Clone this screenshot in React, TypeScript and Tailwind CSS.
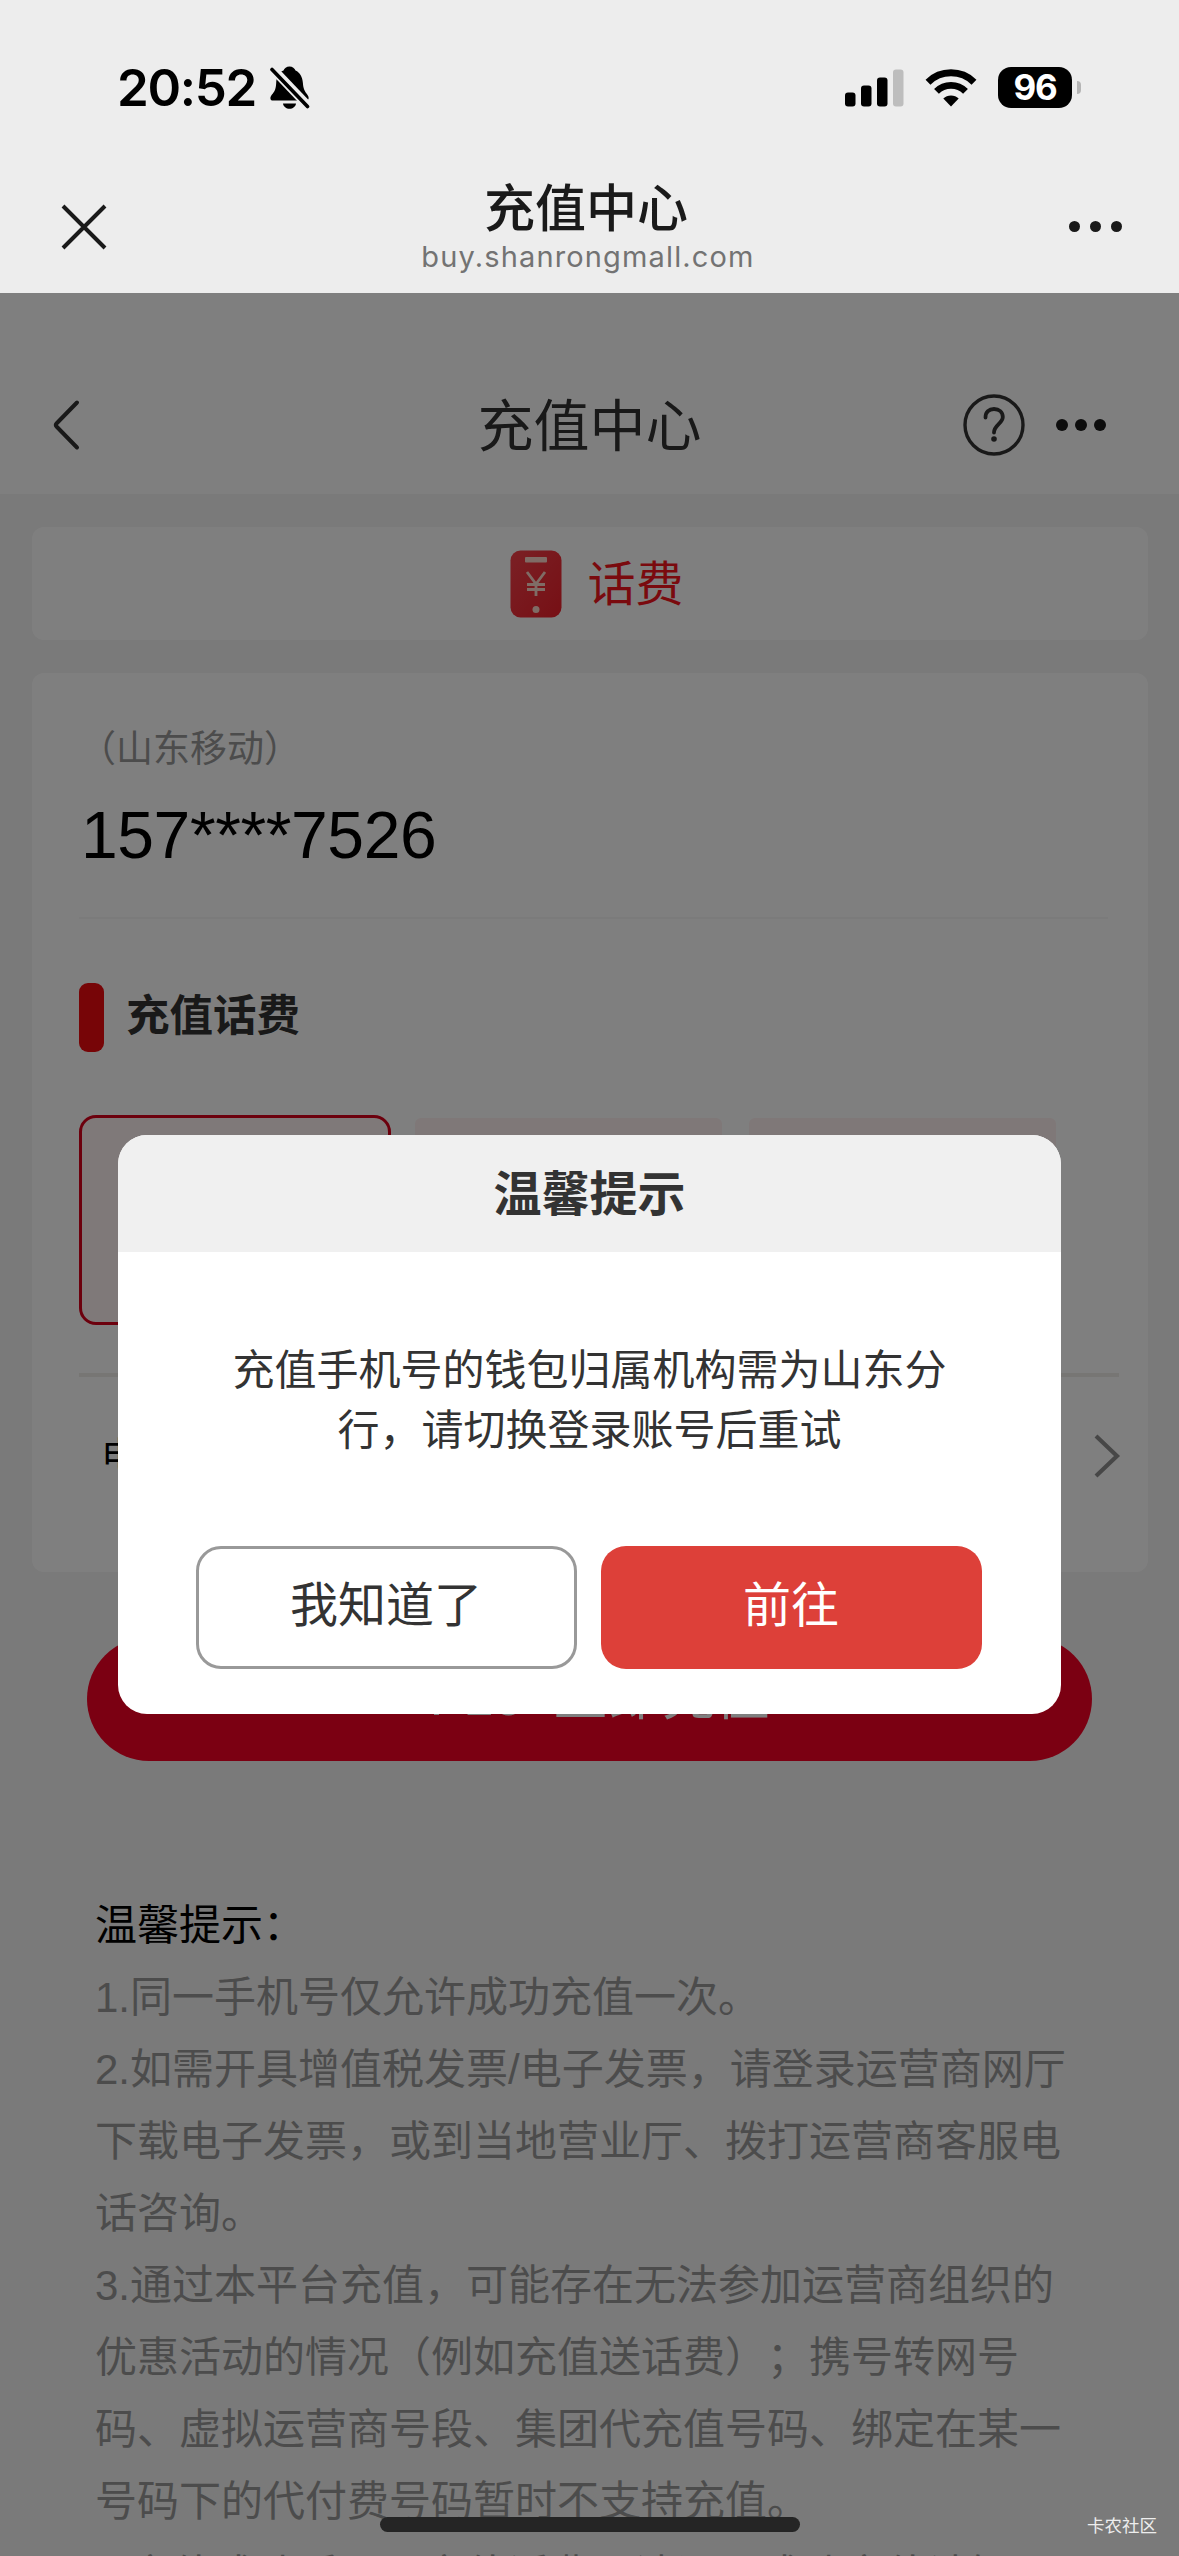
import { ReactNode } from "react";

const tips = [
  "1.同一手机号仅允许成功充值一次。",
  "2.如需开具增值税发票/电子发票，请登录运营商网厅",
  "下载电子发票，或到当地营业厅、拨打运营商客服电",
  "话咨询。",
  "3.通过本平台充值，可能存在无法参加运营商组织的",
  "优惠活动的情况（例如充值送话费）；携号转网号",
  "码、虚拟运营商号段、集团代充值号码、绑定在某一",
  "号码下的代付费号码暂时不支持充值。",
];

const Dots = ({ size, gap }: { size: string; gap: string }) => (
  <div className={`flex ${gap}`}>
    {[0, 1, 2].map((dot) => (
      <span key={dot} className={`${size} rounded-full bg-[#1a1a1a]`} />
    ))}
  </div>
);

const BellOffSvg = () => (
  <svg width="40" height="43" viewBox="0 0 40 43" fill="none">
    <path
      d="M19.500 0.500c-3 0-5.200 1.800-6 4C8.500 6.500 6.500 11 6.200 17c-.3 6-1.600 8.500-4.200 11.500C-.5 31.500 0 34.500 3 34.500h33c3 0 3.500-3 1.200-6-2.400-3-4-6-4.300-11.500C32.500 11 30 6.500 25.500 4.500c-.8-2.200-3-4-6-4z"
      fill="black"
    />
    <path d="M13 37.500h13c-.4 3.200-3.300 5.300-6.500 5.300S13.400 40.700 13 37.500z" fill="black" />
    <path d="M-1 -1L42 44" stroke="#ededed" strokeWidth="9" />
    <path d="M2 3.500L37.500 40.500" stroke="black" strokeWidth="3.600" strokeLinecap="round" />
  </svg>
);

const SignalSvg = () => (
  <svg width="60" height="38" viewBox="0 0 60 38">
    <rect x="0" y="23.500" width="10.500" height="14" rx="3" />
    <rect x="16" y="16.500" width="10.500" height="21" rx="3" />
    <rect x="32" y="8.500" width="10.500" height="29" rx="3" />
    <rect x="48" y="0.500" width="10.500" height="37" rx="3" fill="#bdbdbd" />
  </svg>
);

const WifiSvg = () => (
  <svg width="52" height="38" viewBox="0 0 52 38" fill="none" stroke="black">
    <path d="M3 13.200A33 33 0 0 1 49 13.200" strokeWidth="7" />
    <path d="M11.500 22.300A20.500 20.500 0 0 1 40.500 22.300" strokeWidth="6.800" />
    <path d="M26 37.500L18.300 29.600A11 11 0 0 1 33.700 29.600z" fill="black" stroke="none" />
  </svg>
);

const BackSvg = () => (
  <svg width="28" height="52" viewBox="0 0 28 52" fill="none">
    <path
      d="M25 3.500L4.500 24.500Q3 26 4.500 27.500L25 48.500"
      stroke="#333333"
      strokeWidth="4"
      strokeLinecap="round"
    />
  </svg>
);

const HelpSvg = () => (
  <svg width="62" height="62" viewBox="0 0 62 62" fill="none" stroke="#333333">
    <circle cx="31" cy="31" r="29" strokeWidth="3.400" />
    <path
      d="M22.500 23.500C22.500 18 26 15 31 15s8.800 3 8.800 8c0 6.500-8.800 8-8.800 15.500"
      strokeWidth="3.800"
      strokeLinecap="round"
    />
    <circle cx="31" cy="45" r="2.800" fill="#333333" stroke="none" />
  </svg>
);

const PhoneFeeSvg = () => (
  <svg width="52" height="68" viewBox="0 0 52 68" fill="none">
    <defs>
      <linearGradient id="fee" x1="0" y1="0" x2="1" y2="1">
        <stop offset="0" stopColor="#f5414a" />
        <stop offset="1" stopColor="#ee1f2a" />
      </linearGradient>
    </defs>
    <rect x="0.500" y="0.500" width="51" height="67" rx="10" fill="url(#fee)" />
    <rect x="15" y="7" width="22" height="5.500" rx="1" fill="#ffd9cc" />
    <path
      d="M17 22L26 34L35 22M26 34V46M17 34.500H35M17 39.500H35"
      stroke="#ffd9cc"
      strokeWidth="2.800"
    />
    <circle cx="26" cy="59.500" r="3.500" fill="#ffd9cc" />
  </svg>
);

const ArrowSvg = () => (
  <svg width="28" height="46" viewBox="0 0 28 46" fill="none">
    <path d="M3 3L24 23L3 43" stroke="#8f8f8f" strokeWidth="4.200" />
  </svg>
);

const Card = ({ className, children }: { className: string; children: ReactNode }) => (
  <section className={`ml-8 mr-[31px] rounded-xl bg-white ${className}`}>{children}</section>
);

const BrowserHeader = () => (
  <header className="h-[293px] bg-[#ededed]">
    <div className="flex h-[175px] items-center pl-[117px] pr-[98px]">
      <span className="w-[153px] whitespace-nowrap font-['Inter',sans-serif] text-[51px] font-semibold leading-none tracking-[-1.3px] text-black">
        20:52
      </span>
      <BellOffSvg />
      <div className="ml-auto flex items-center">
        <SignalSvg />
        <div className="ml-5">
          <WifiSvg />
        </div>
        <div className="ml-[21px] mr-[5px] flex h-[41px] w-[74px] items-center justify-center rounded-[13px] bg-black font-['Inter',sans-serif] text-[35px] font-bold leading-none tracking-[-1.2px] text-white">
          96
        </div>
        <span className="h-[13px] w-1 rounded-r-full bg-[#b5b5b5]" />
      </div>
    </div>
    <div className="flex h-[103px] items-center justify-between pl-[61px] pr-[57px]">
      <svg width="46" height="46" viewBox="0 0 46 46" stroke="#1a1a1a" strokeWidth="4">
        <path d="M2 2L44 44M44 2L2 44" />
      </svg>
      <div className="flex flex-col items-center">
        <h1 className="mr-1 text-[51px] font-medium leading-[60px] text-[#1a1a1a]">充值中心</h1>
        <p className="font-['Inter',sans-serif] text-[29px] leading-[34px] tracking-[1.15px] text-[#737373]">
          buy.shanrongmall.com
        </p>
      </div>
      <Dots size="size-[11px]" gap="gap-[10px]" />
    </div>
  </header>
);

const Modal = () => (
  <div className="absolute inset-x-0 bottom-0 top-[293px] flex items-center justify-center bg-black/50">
    <div className="h-[579px] w-[943px] overflow-hidden rounded-[29px] bg-white">
      <div className="flex h-[117px] items-center justify-center bg-[#f0f0f0] pt-[2px]">
        <h2 className="text-[48px] font-bold leading-none text-[#333333]">温馨提示</h2>
      </div>
      <div className="px-[78px] pt-[89px] text-center text-[42px] leading-[60px] text-[#333333]">
        <p>充值手机号的钱包归属机构需为山东分</p>
        <p>行，请切换登录账号后重试</p>
      </div>
      <div className="mt-[85px] flex justify-center gap-6 pr-[2px] text-[48px]">
        <button className="h-[123px] w-[381px] rounded-[25px] border-3 border-[#999999] pb-[3px] text-[#333333]">
          我知道了
        </button>
        <button className="h-[123px] w-[381px] rounded-[25px] bg-[#dd4039] pb-[3px] text-white">
          前往
        </button>
      </div>
    </div>
  </div>
);

const App = () => {
  return (
    <div className="relative h-[2556px] w-[1179px] overflow-hidden bg-[#f4f4f4] font-['Liberation_Sans','Noto_Sans_CJK_SC',sans-serif] [text-spacing-trim:space-all]">
      <BrowserHeader />
      <nav className="flex h-[201px] items-center bg-white px-[73px] pt-[63px]">
        <div className="flex-1">
          <div className="-ml-[21px]">
            <BackSvg />
          </div>
        </div>
        <h2 className="pt-[3px] text-[56px] leading-none text-[#333333]">充值中心</h2>
        <div className="flex flex-1 items-center justify-end gap-[31px]">
          <HelpSvg />
          <Dots size="size-3" gap="gap-[7px]" />
        </div>
      </nav>

      <Card className="mt-[33px] flex h-[113px] items-center justify-center gap-[25px] pl-[14px]">
        <PhoneFeeSvg />
        <span className="pt-[3px] text-[48px] leading-none text-[#f5141d]">话费</span>
      </Card>

      <Card className="mt-[33px] flex h-[899px] flex-col pl-[47px] pr-[29px]">
        <p className="mt-[53px] text-[37px] leading-[48px] text-[#999999]">（山东移动）</p>
        <p className="ml-[2px] mt-[23px] text-[66px] leading-[76px] tracking-[-0.4px] text-black">
          157****7526
        </p>
        <div className="mr-[11px] mt-[44px] h-[2px] bg-[#f6f6f6]" />
        <div className="mt-[64px] flex h-[69px] items-center gap-[22px]">
          <span className="h-full w-[25px] rounded-[9px] bg-[#ee0a0e]" />
          <h3 className="pb-[1px] text-[43.500px] font-bold leading-none text-[#333333]">充值话费</h3>
        </div>
        <div className="mt-[63px] flex">
          <div className="h-[210px] w-[312px] rounded-[17px] border-3 border-[#d9001b] bg-[#fff2f2]" />
          <div className="ml-6 mt-[3px] h-[204px] w-[307px] rounded-md bg-[#fff0f0]" />
          <div className="ml-[27px] mt-[3px] h-[204px] w-[307px] rounded-md bg-[#fff0f0]" />
        </div>
        <div className="mt-[48px] h-[4px] bg-[#eeece8]" />
        <div className="-mr-[2px] flex h-[158px] items-center justify-between pl-[22px]">
          <span className="text-[38px] text-black">电子券</span>
          <ArrowSvg />
        </div>
      </Card>

      <div className="mx-[87px] mt-[65px] flex h-[124px] justify-center whitespace-pre rounded-full bg-[#f60024] text-[54px] leading-[118px] text-white">
        ￥10  立即充值
      </div>

      <div className="mt-[129px] whitespace-nowrap pl-[95px] text-[42px] leading-[72px] text-[#999999]">
        <h3 className="text-black">温馨提示：</h3>
        {tips.map((tip) => (
          <p key={tip}>{tip}</p>
        ))}
        <p className="mt-[2px]">4.充值成功后，一充值话费，请退，成功充值请知</p>
      </div>

      <Modal />

      <div className="absolute bottom-6 left-[380px] h-[15px] w-[420px] rounded-full bg-[#252525]" />
      <span className="absolute bottom-[18px] right-[22px] text-[17.500px] leading-6 text-[#ededed]">
        卡农社区
      </span>
    </div>
  );
};

export default App;
